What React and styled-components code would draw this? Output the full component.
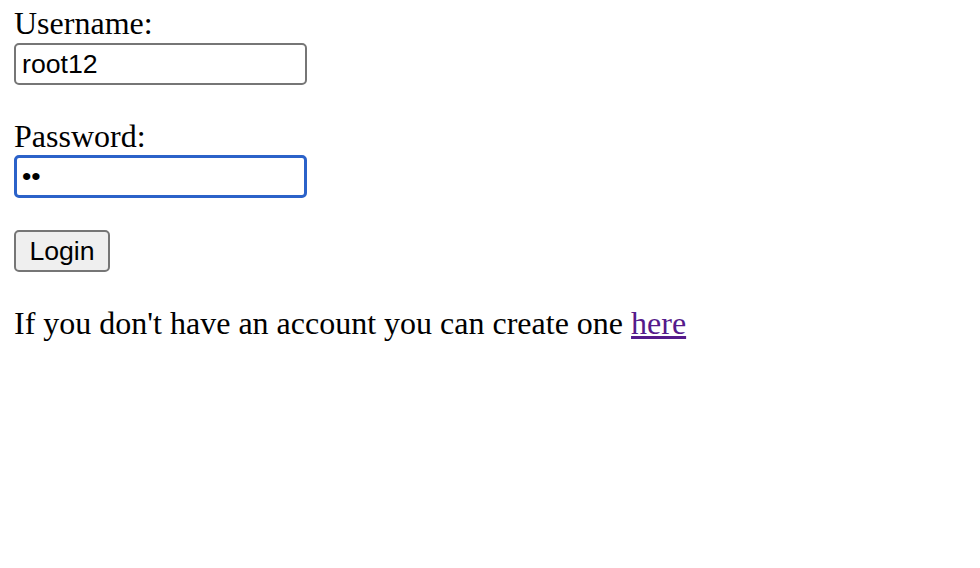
import React from "react";
import styled, { createGlobalStyle } from "styled-components";

const Global = createGlobalStyle`
  html, body { margin: 0; padding: 0; background: #fff; }
  body { font-family: "Liberation Serif", "Times New Roman", serif; color: #000; }
`;

const Page = styled.div`
  padding: 5px 14px;
`;

const Form = styled.form`
  display: flex;
  flex-direction: column;
  align-items: flex-start;
`;

const Field = styled.div`
  display: flex;
  flex-direction: column;
  align-items: flex-start;
  margin-bottom: ${(p) => p.$gap || "33px"};
`;

const Label = styled.label`
  font-size: 32px;
  line-height: 37px;
  height: 37px;
  margin-bottom: ${(p) => (p.$tight ? "0" : "1px")};
`;

const TextInput = styled.input`
  box-sizing: border-box;
  width: 293px;
  height: ${(p) => (p.$focused ? "43px" : "42px")};
  padding: 0 ${(p) => (p.$focused ? "5px" : "6px")};
  border: ${(p) => (p.$focused ? "3px solid #2b62c9" : "2px solid #767676")};
  border-radius: 5px;
  font-family: "Liberation Sans", Arial, sans-serif;
  font-size: 26.67px;
  color: #000;
  background: #fff;
  outline: none;
  caret-color: #000;
`;

const Button = styled.button`
  box-sizing: border-box;
  width: 96px;
  height: 42px;
  padding: 0;
  border: 2px solid #767676;
  border-radius: 5px;
  background: #efefef;
  font-family: "Liberation Sans", Arial, sans-serif;
  font-size: 26.67px;
  color: #000;
`;

const Paragraph = styled.p`
  margin: 33px 0 0;
  font-size: 32px;
  line-height: 37px;
`;

const Link = styled.a`
  color: #551a8b;
  text-decoration: underline;
`;

export default function App() {
  return (
    <Page>
      <Global />
      <Form onSubmit={(e) => e.preventDefault()}>
        <Field>
          <Label htmlFor="username">Username:</Label>
          <TextInput id="username" type="text" defaultValue="root12" />
        </Field>
        <Field $gap="32px">
          <Label htmlFor="password" $tight>Password:</Label>
          <TextInput id="password" type="password" defaultValue="ab" $focused autoFocus />
        </Field>
        <Button type="submit">Login</Button>
      </Form>
      <Paragraph>
        If you don't have an account you can create one <Link href="#">here</Link>
      </Paragraph>
    </Page>
  );
}
